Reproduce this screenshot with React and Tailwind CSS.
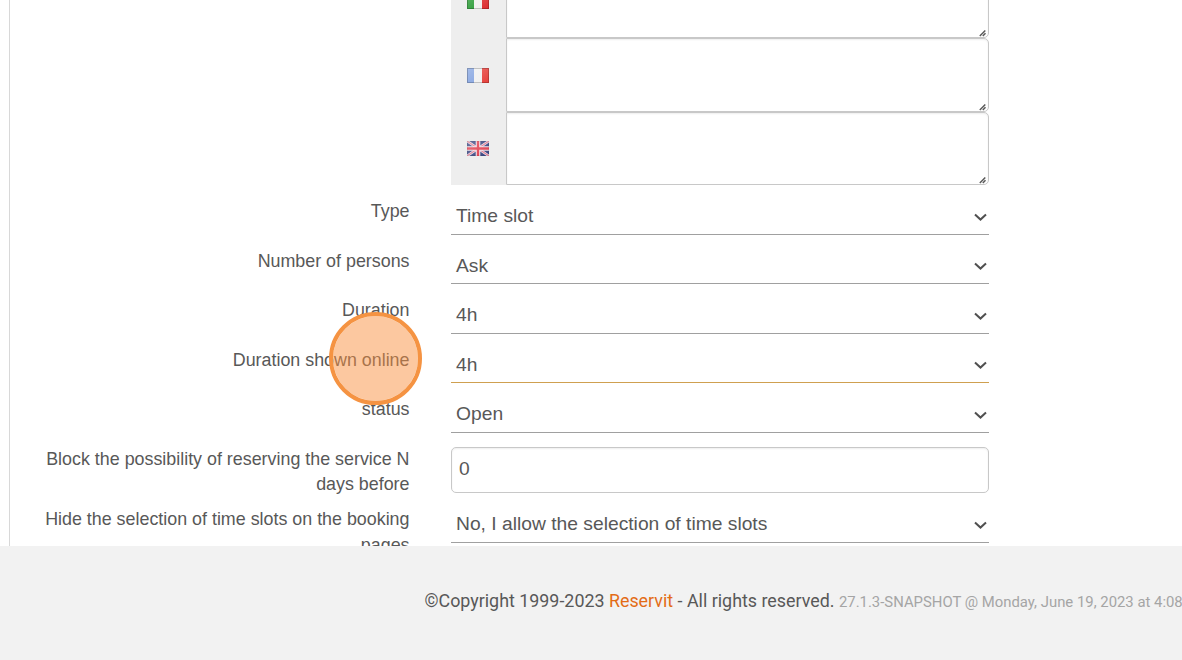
import React from "react";

function Flag({ kind }) {
  return (
    <svg width="22" height="15" viewBox="0 0 22 15" className="block">
      <defs>
        <linearGradient id={`shade-${kind}`} x1="0" y1="0" x2="1" y2="1">
          <stop offset="0" stopColor="#fff" stopOpacity="0.28" />
          <stop offset="1" stopColor="#fff" stopOpacity="0" />
        </linearGradient>
      </defs>
      {kind === "it" && (
        <>
          <rect width="8" height="15" fill="#23982e" />
          <rect x="7" width="8" height="15" fill="#f0f0ee" />
          <rect x="15" width="7" height="15" fill="#dc2a2c" />
        </>
      )}
      {kind === "fr" && (
        <>
          <rect width="8" height="15" fill="#82a2e0" />
          <rect x="7" width="8" height="15" fill="#f0f0f0" />
          <rect x="15" width="7" height="15" fill="#e63f3a" />
        </>
      )}
      {kind === "gb" && (
        <>
          <rect width="22" height="15" fill="#36437f" />
          <path d="M0 0L22 15M22 0L0 15" stroke="#e8dfec" strokeWidth="2.6" />
          <path d="M0 0L22 15M22 0L0 15" stroke="#e07a8c" strokeWidth="1.1" />
          <path d="M11 0V15M0 7.5H22" stroke="#f3e4ea" strokeWidth="4.6" />
          <path d="M11 0V15M0 7.5H22" stroke="#e03c4c" strokeWidth="2.4" />
        </>
      )}
      <rect width="22" height="15" fill={`url(#shade-${kind})`} />
      <rect x="0.5" y="0.5" width="21" height="14" fill="none" stroke="#000" strokeOpacity={kind === "gb" ? "0.06" : "0.2"} />
    </svg>
  );
}

function TextRow({ kind, className }) {
  return (
    <div className={`flex ${className}`}>
      <div className="flex w-[55px] items-center justify-center bg-[#eeeeee] pr-px">
        <Flag kind={kind} />
      </div>
      <div className="flex flex-1 items-end justify-end rounded-r-[5px] border border-[#c8c8c8] bg-white pr-px shadow-[inset_0_1px_2px_rgba(0,0,0,0.07)]">
        <svg width="8" height="8" viewBox="0 0 8 8" className="block">
          <path d="M0.8 7L6.3 1.5M3.8 7L6.5 4.3" stroke="#5a5a5a" strokeWidth="1.5" />
        </svg>
      </div>
    </div>
  );
}

function Row({ label, value, className = "h-[50px]", line = "border-[#a0a0a0]", arrow = "mt-[3px]" }) {
  return (
    <div className={`flex ${className}`}>
      <div className="mr-[41.5px] w-[399.5px] shrink-0 pt-[14px] text-right text-[17.87px] leading-[25px]">{label}</div>
      <div className={`flex w-[538px] items-center justify-between border-b pt-[13px] pr-[2px] pl-[5px] ${line}`}>
        <span className="text-[19.25px] leading-[22px]">{value}</span>
        <svg width="13" height="9" viewBox="0 0 13 9" className={arrow}>
          <path d="M1 1.5L6.5 6.6L12 1.5" fill="none" stroke="#505050" strokeWidth="2" />
        </svg>
      </div>
    </div>
  );
}

export default function App() {
  return (
    <div className="relative h-[660px] w-[1182px] overflow-hidden bg-white font-['Liberation_Sans',sans-serif] text-[#585858]">
      <main className="h-[546px] overflow-hidden pl-[9px]">
        <div className="h-[546px] border-l border-[#d8d8d8]">
          <div className="ml-[441px] w-[538px]">
            <div className="flex h-[38px] flex-col justify-end overflow-hidden">
              <TextRow kind="it" className="h-[73px] shrink-0" />
            </div>
            <TextRow kind="fr" className="h-[74px]" />
            <TextRow kind="gb" className="h-[73px]" />
          </div>
          <Row label="Type" value="Time slot" />
          <Row label="Number of persons" value="Ask" className="h-[49px]" arrow="mt-[2px]" />
          <Row label="Duration" value="4h" />
          <Row label="Duration shown online" value="4h" className="h-[49px]" line="border-[#cfa050]" arrow="mt-[2px]" />
          <Row label="status" value="Open" />
          <div className="flex h-[60px]">
            <div className="mr-[41.5px] w-[399.5px] shrink-0 pt-[14px] text-right text-[17.87px] leading-[25px]">
              Block the possibility of reserving the service N
              <br />
              days before
            </div>
            <div className="mt-[14px] flex h-[46px] w-[538px] items-center rounded-[5px] border border-[#c8c8c8] pb-[2px] pl-[7px] text-[19.25px] shadow-[inset_0_1px_2px_rgba(0,0,0,0.07)]">
              0
            </div>
          </div>
          <Row
            label={
              <>
                <span className="block">Hide the selection of time slots on the booking</span>
                <span className="block pt-px">pages</span>
              </>
            }
            value="No, I allow the selection of time slots"
          />
        </div>
      </main>
      <footer className="h-[114px] bg-[#f2f2f2] pt-[42px] pl-[424.5px] font-['Roboto',sans-serif] leading-[26px] whitespace-nowrap">
        <span className="text-[17.87px]">
          ©Copyright 1999-2023 <span className="text-[#e36c16]">Reservit</span> - All rights reserved.{" "}
        </span>
        <span className="text-[14.88px] text-[#a5a5a5]">27.1.3-SNAPSHOT @ Monday, June 19, 2023 at 4:08</span>
      </footer>
      <div className="absolute top-[311.5px] left-[329px] h-[93px] w-[93px] rounded-full border-4 border-[#f59342] bg-[#f98f3d]/49 bg-clip-padding" />
    </div>
  );
}
